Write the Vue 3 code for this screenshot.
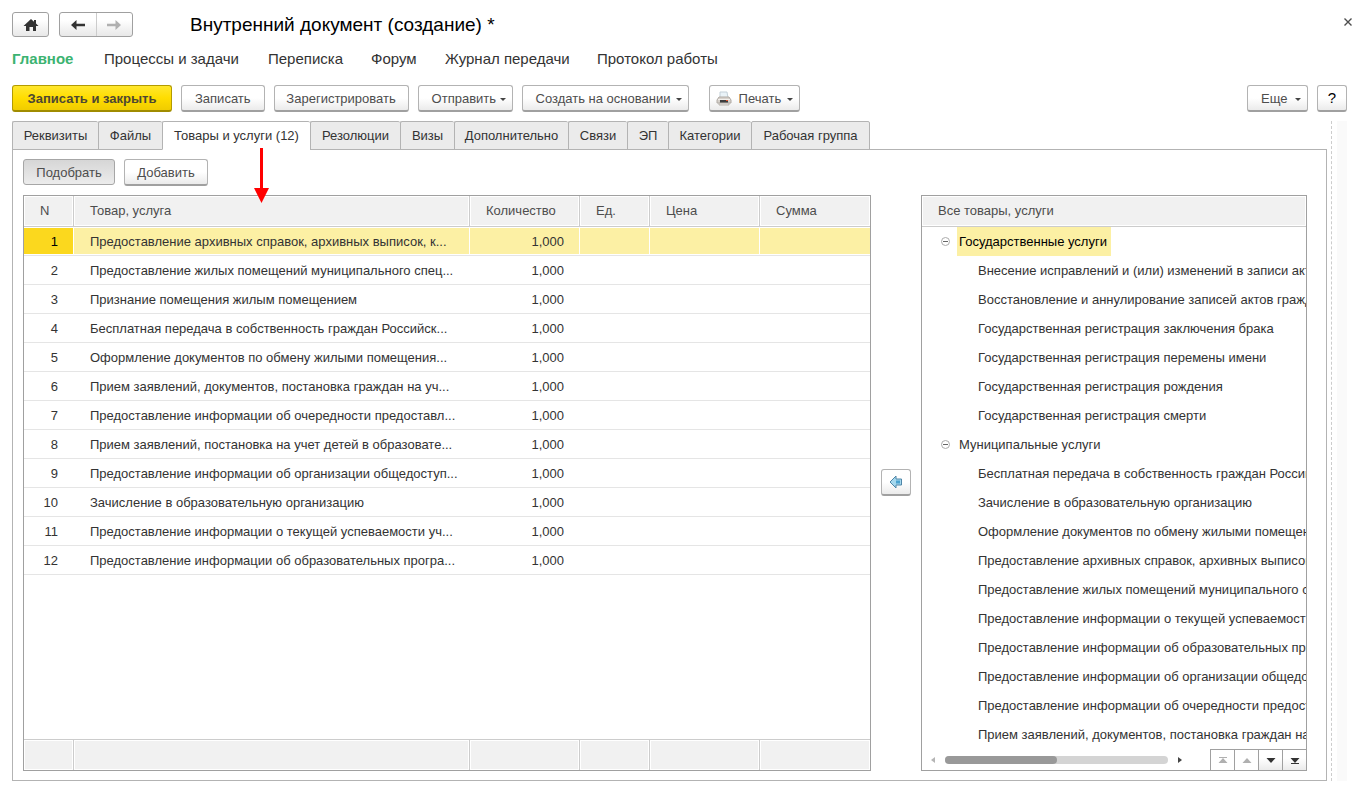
<script setup>
import { ref } from 'vue'

const sections = ['Главное', 'Процессы и задачи', 'Переписка', 'Форум', 'Журнал передачи', 'Протокол работы']
const tabs = ['Реквизиты', 'Файлы', 'Товары и услуги (12)', 'Резолюции', 'Визы', 'Дополнительно', 'Связи', 'ЭП', 'Категории', 'Рабочая группа']
const activeTab = ref(2)
const selected = ref(0)
const columns = ['N', 'Товар, услуга', 'Количество', 'Ед.', 'Цена', 'Сумма']
const rows = [
  'Предоставление архивных справок, архивных выписок, к...',
  'Предоставление жилых помещений муниципального спец...',
  'Признание помещения жилым помещением',
  'Бесплатная передача в собственность граждан Российск...',
  'Оформление документов по обмену жилыми помещения...',
  'Прием заявлений, документов, постановка граждан на уч...',
  'Предоставление информации об очередности предоставл...',
  'Прием заявлений, постановка на учет детей в образовате...',
  'Предоставление информации об организации общедоступ...',
  'Зачисление в образовательную организацию',
  'Предоставление информации о текущей успеваемости уч...',
  'Предоставление информации об образовательных програ...'
]
const groups = [
  {
    name: 'Государственные услуги',
    current: true,
    items: [
      'Внесение исправлений и (или) изменений в записи актов',
      'Восстановление и аннулирование записей актов гражданского',
      'Государственная регистрация заключения брака',
      'Государственная регистрация перемены имени',
      'Государственная регистрация рождения',
      'Государственная регистрация смерти'
    ]
  },
  {
    name: 'Муниципальные услуги',
    current: false,
    items: [
      'Бесплатная передача в собственность граждан Российской',
      'Зачисление в образовательную организацию',
      'Оформление документов по обмену жилыми помещениями',
      'Предоставление архивных справок, архивных выписок',
      'Предоставление жилых помещений муниципального спец',
      'Предоставление информации о текущей успеваемости',
      'Предоставление информации об образовательных программах',
      'Предоставление информации об организации общедоступного',
      'Предоставление информации об очередности предоставления',
      'Прием заявлений, документов, постановка граждан на учет'
    ]
  }
]
</script>

<template>
  <div class="page">
    <header class="title-row">
      <button class="btn nav" aria-label="Домой">
        <svg width="16" height="14" viewBox="0 0 16 14"><path d="M8 1 L11 3.800 V2 H13 V5.600 L15.500 8 H13 V13 H10 V9 H6.500 V13 H3 V8 H0.500 Z" fill="#333" /></svg>
      </button>
      <div class="history">
        <button aria-label="Назад">
          <svg width="16" height="12" viewBox="0 0 16 12"><path d="M1 6 L6.500 1 V4.700 H15 V7.300 H6.500 V11 Z" fill="#333" /></svg>
        </button>
        <button aria-label="Вперед" disabled>
          <svg width="16" height="12" viewBox="0 0 16 12"><path d="M15 6 L9.500 1 V4.700 H1 V7.300 H9.500 V11 Z" fill="#b0b0b0" /></svg>
        </button>
      </div>
      <h1>Внутренний документ (создание) *</h1>
      <button class="close" aria-label="Закрыть">
        <svg width="8" height="8" viewBox="0 0 8 8"><path d="M0.500 0.500 L7.500 7.500 M7.500 0.500 L0.500 7.500" stroke="#4d4d4d" stroke-width="1.400" /></svg>
      </button>
    </header>

    <nav class="sections">
      <a v-for="(s, i) in sections" :key="s" href="#" :class="{ current: i === 0 }">{{ s }}</a>
    </nav>

    <div class="toolbar">
      <button class="btn primary">Записать и закрыть</button>
      <button class="btn">Записать</button>
      <button class="btn register">Зарегистрировать</button>
      <button class="btn menu send">Отправить<i class="caret"></i></button>
      <button class="btn menu based">Создать на основании<i class="caret"></i></button>
      <button class="btn menu print">
        <svg width="16" height="16" viewBox="0 0 16 16">
          <path d="M4 1 H11 L12 7 H4 Z" fill="#eaf3f8" stroke="#c3d0d8" />
          <path d="M3 6 H13 L15 9 V12 H1 V9 Z" fill="#d6d1cb" stroke="#b0aaa4" />
          <path d="M2 8.500 H14" stroke="#f2efec" />
          <path d="M4 9 H12 V12 H4 Z" fill="#3d3d3d" />
          <path d="M10 9 H12 V10 H10 Z" fill="#e0532f" />
          <path d="M3 12 H13 V14 H3 Z" fill="#e9e6e2" stroke="#b7b2ac" />
        </svg>
        Печать<i class="caret"></i>
      </button>
      <span class="grow"></span>
      <button class="btn menu more">Еще<i class="caret"></i></button>
      <button class="btn help">?</button>
    </div>

    <div class="body">
      <main class="content">
        <div class="tabs" role="tablist">
          <button v-for="(t, i) in tabs" :key="t" role="tab" :aria-selected="i === activeTab" :class="{ active: i === activeTab }" @click="activeTab = i">{{ t }}</button>
        </div>
        <section class="panel">
          <svg class="pointer" width="15" height="55" viewBox="0 0 15 55"><path d="M6 0 H9 V40 H15 L7.500 55 L0 40 H6 Z" fill="#f00" /></svg>
          <div class="commands">
            <button class="btn pressed">Подобрать</button>
            <button class="btn add">Добавить</button>
          </div>
          <div class="split">
            <div class="frame goods">
              <table>
                <colgroup><col class="c-n"><col><col class="c-wide"><col class="c-unit"><col class="c-wide"><col class="c-wide"></colgroup>
                <thead>
                  <tr><th v-for="c in columns" :key="c" scope="col">{{ c }}</th></tr>
                </thead>
                <tbody>
                  <tr v-for="(r, i) in rows" :key="r" :class="{ selected: i === selected }" @click="selected = i">
                    <td class="num">{{ i + 1 }}</td>
                    <td>{{ r }}</td>
                    <td class="qty">1,000</td>
                    <td></td>
                    <td></td>
                    <td></td>
                  </tr>
                </tbody>
              </table>
              <div class="grow"></div>
              <div class="totals"><span v-for="c in columns" :key="c"></span></div>
            </div>

            <button class="btn move" aria-label="Перенести">
              <svg width="14" height="14" viewBox="0 0 14 14">
                <path d="M1 7 L7 1 V4 H12.500 V10 H7 V13 Z" fill="#a5d8ee" stroke="#4f86a8" />
                <path d="M7 5.500 H11 V8.500 H7 Z" fill="#4aa3d0" />
              </svg>
            </button>

            <div class="frame catalog">
              <div class="catalog-head">Все товары, услуги</div>
              <ul class="tree">
                <li v-for="g in groups" :key="g.name">
                  <div class="group">
                    <button class="toggle" aria-label="Свернуть">
                      <svg width="9" height="9" viewBox="0 0 9 9"><circle cx="4.500" cy="4.500" r="4" fill="#fff" stroke="#aaa" /><path d="M2 4.500 H7" stroke="#666" /></svg>
                    </button>
                    <span :class="{ marked: g.current }">{{ g.name }}</span>
                  </div>
                  <ul>
                    <li v-for="it in g.items" :key="it" class="leaf">{{ it }}</li>
                  </ul>
                </li>
              </ul>
              <div class="scroller">
                <svg width="4" height="8" viewBox="0 0 4 8"><path d="M4 1 V7 L0 4 Z" fill="#b5b5b5" /></svg>
                <div class="track"><div class="thumb"></div></div>
                <svg width="4" height="8" viewBox="0 0 4 8"><path d="M0 1 V7 L4 4 Z" fill="#444" /></svg>
                <div class="pager">
                  <button aria-label="В начало" disabled><svg width="10" height="8" viewBox="0 0 10 8"><path d="M1 1 H9 V2 H1 Z M5 2 L9.500 7 H0.500 Z" fill="#b0b0b0" /></svg></button>
                  <button aria-label="Вверх" disabled><svg width="10" height="8" viewBox="0 0 10 8"><path d="M5 2 L9.500 7 H0.500 Z" fill="#b0b0b0" /></svg></button>
                  <button aria-label="Вниз"><svg width="10" height="8" viewBox="0 0 10 8"><path d="M0.500 2 H9.500 L5 7 Z" fill="#333" /></svg></button>
                  <button aria-label="В конец"><svg width="10" height="8" viewBox="0 0 10 8"><path d="M0.500 2 H9.500 L5 7 Z M1 7 H9 V8 H1 Z" fill="#333" /></svg></button>
                </div>
              </div>
            </div>
          </div>
        </section>
      </main>
      <div class="edge"></div>
      <div class="strip"></div>
    </div>
  </div>
</template>

<style>
body { background: #fff; }
</style>

<style scoped>
* { box-sizing: border-box; }
.page {
  display: flex;
  flex-direction: column;
  min-height: 100vh;
  padding: 12px 19px 12px 12px;
  font: 13px/16px "Liberation Sans", Arial, sans-serif;
  color: #333;
}
button { font: inherit; color: inherit; margin: 0; padding: 0; border: 0; background: none; }
ul { list-style: none; margin: 0; padding: 0; }
svg { display: block; flex: none; }
.grow { flex: 1; }

.title-row { display: flex; align-items: center; height: 25px; }
.btn {
  display: flex;
  align-items: center;
  justify-content: center;
  height: 27px;
  padding: 2px 13px 0;
  border: 1px solid #b3b3b3;
  border-bottom: 2px solid #a0a0a0;
  border-radius: 3px;
  background: linear-gradient(#fff 50%, #ebebeb);
  color: #4d4d4d;
  white-space: nowrap;
}
.btn.nav, .history {
  height: 25px;
  border: 1px solid #a0a0a0;
  border-radius: 3px;
  background: linear-gradient(#fff 30%, #e8e8e8);
}
.btn.nav { width: 37px; padding: 0; margin-right: 10px; }
.history { display: flex; width: 74px; }
.history button { flex: 1; display: flex; align-items: center; justify-content: center; }
.history button + button { border-left: 1px solid #ccc; }
h1 { margin: 0 0 0 57px; font-size: 19px; line-height: 24px; font-weight: 400; color: #000; }
.close { align-self: flex-start; margin-left: auto; width: 16px; height: 20px; display: flex; align-items: center; justify-content: center; margin-right: -9px; }

.sections { display: grid; grid-template-columns: 92px 164px 103px 74px 152px auto; justify-content: start; margin-top: 12px; font-size: 15px; line-height: 20px; white-space: nowrap; }
.sections a { color: #333; text-decoration: none; }
.sections a.current { color: #3cb371; font-weight: 700; }

.toolbar { display: flex; gap: 9px; margin-top: 16px; }
.btn.primary { width: 160px; background: linear-gradient(#ffe72e, #ffdd00 50%, #f0cc00); border-color: #b39b00; border-bottom-color: #a08c00; font-weight: 700; color: #4d4733; }
.btn.register { width: 135px; padding-left: 0; padding-right: 0; }
.btn.menu { justify-content: flex-start; padding-right: 6px; }
.caret { width: 0; height: 0; margin-left: auto; border: 3px solid transparent; border-top-color: #444; border-bottom: 0; }
.btn.send { width: 95px; }
.btn.based { width: 167px; }
.btn.print { width: 91px; margin-left: 11px; padding-left: 6px; }
.print svg { margin-right: 7px; }
.btn.more { width: 61px; }
.btn.help { width: 30px; padding: 0; font-size: 15px; color: #000; }

.body { display: flex; flex: 1; margin-top: 9px; }
.content { display: flex; flex-direction: column; flex: 1; min-width: 0; }
.tabs { display: grid; grid-template-columns: 86px 64px 148px 90px 54px 114px 59px 41px 83px 119px; }
.tabs button { height: 29px; border: 1px solid #b3b3b3; border-right: 0; border-radius: 2px 2px 0 0; background: #ebebeb; white-space: nowrap; }
.tabs button:last-child { border-right: 1px solid #b3b3b3; }
.tabs button.active { position: relative; z-index: 1; background: #fff; border-bottom-color: #fff; }
.panel { position: relative; display: flex; flex-direction: column; flex: 1; margin-top: -1px; padding: 9px 19px 9px 10px; border: 1px solid #b3b3b3; }
.pointer { position: absolute; left: 241px; top: -2px; z-index: 2; }
.commands { display: flex; gap: 9px; margin-bottom: 9px; }
.btn.pressed { width: 92px; height: 26px; border: 1px solid #a6a6a6; background: linear-gradient(#d6d6d6, #ececec); }
.btn.add { width: 84px; }
.split { display: flex; flex: 1; gap: 10px; }
.frame { display: flex; flex-direction: column; border: 1px solid #a0a0a0; min-width: 0; }
.goods { flex: 846 1 0; }
.catalog { flex: 384 1 0; }

table { width: 100%; table-layout: fixed; border-collapse: separate; border-spacing: 0; }
.c-n { width: 50px; }
.c-wide { width: 110px; }
.c-unit { width: 70px; }
th, td { padding: 0 16px; text-align: left; font-weight: 400; white-space: nowrap; overflow: hidden; }
th { height: 31px; background: #f1f1f1; color: #4d4d4d; border-right: 1px solid #ccc; border-bottom: 1px solid #ccc; box-shadow: inset 0 0 0 1px #fff; }
th:last-child { border-right: 0; }
td { height: 29px; padding-top: 2px; border-bottom: 1px solid #e5e5e5; }
td.num, td.qty { text-align: right; }
.selected td { background: #fcf0a4; box-shadow: inset -1px -1px #fff, inset 0 1px #fff; }
.selected td:last-child { box-shadow: inset 0 -1px #fff, inset 0 1px #fff; }
.selected td.num { background: #fbd81e; color: #000; }
.totals { display: grid; grid-template-columns: 50px 1fr 110px 70px 110px 110px; height: 31px; border-top: 1px solid #ccc; }
.totals span { background: #f1f1f1; border-right: 1px solid #ccc; box-shadow: inset 0 0 0 1px #fff; }
.totals span:last-child { border-right: 0; }

.btn.move { align-self: center; width: 30px; margin-bottom: 2px; padding: 0; }

.catalog-head { height: 31px; padding: 0 16px; line-height: 30px; background: #f1f1f1; color: #4d4d4d; border-bottom: 1px solid #ccc; box-shadow: inset 0 0 0 1px #fff; }
.tree { overflow: hidden; line-height: 29px; white-space: nowrap; }
.group { display: flex; align-items: center; height: 29px; padding-left: 19px; }
.toggle { margin-right: 7px; }
.group span { padding: 0 4px 0 2px; }
.marked { background: #fcf0a4; color: #000; }
.leaf { height: 29px; padding-left: 56px; }
.scroller { display: flex; align-items: center; margin-top: auto; padding-left: 9px; }
.track { flex: 1; height: 8px; margin: 0 10px; border-radius: 4px; background: #d4d4d4; }
.thumb { width: 50%; height: 8px; border-radius: 4px; background: #999; }
.pager { display: flex; margin-left: 28px; border-top: 1px solid #a0a0a0; }
.pager button { display: flex; align-items: center; justify-content: center; width: 24px; height: 20px; border-left: 1px solid #a0a0a0; background: linear-gradient(#fff 40%, #ebebeb); }
.pager button:disabled { background: #fff; }

.edge { width: 5px; border-right: 1px dashed #ccc; }
.strip { width: 10px; margin-left: 5px; background: #fafafa; }
</style>
